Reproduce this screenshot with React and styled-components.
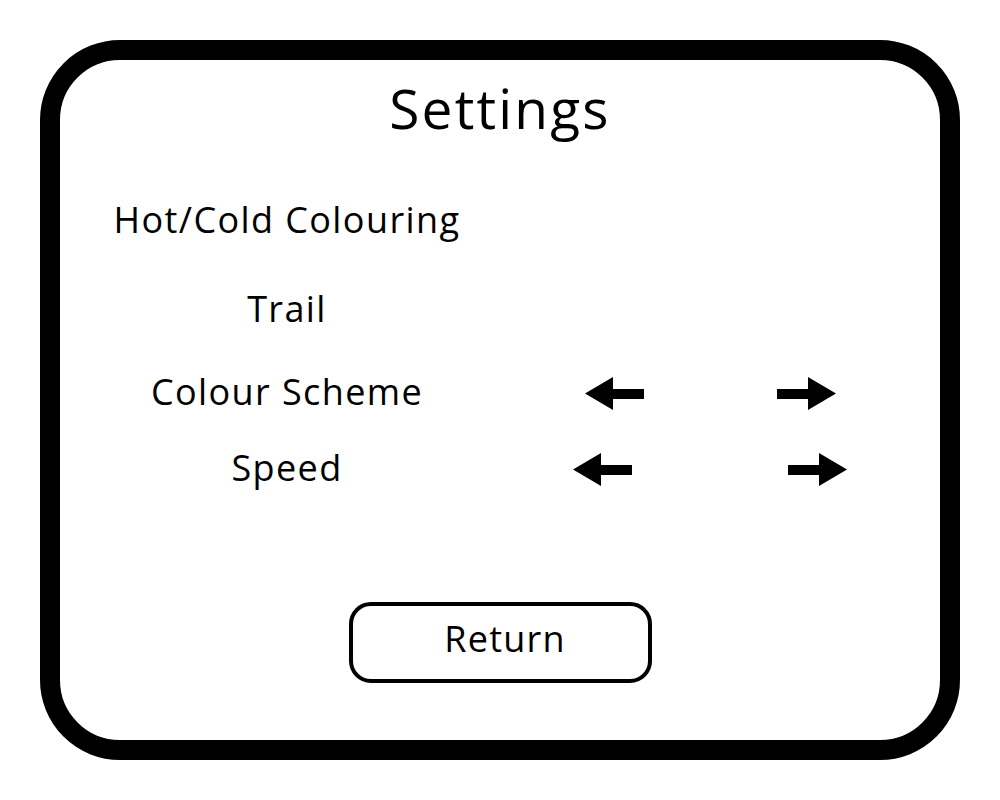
import React from "react";
import styled, { createGlobalStyle } from "styled-components";

// Global reset
const GlobalStyle = createGlobalStyle`
  html, body {
    margin: 0;
    padding: 0;
    background: #ffffff;
  }
  body {
    font-family: "Open Sans", "Noto Sans", sans-serif;
    color: #000000;
  }
`;

// Styled Components
const Page = styled.div`
  width: 1000px;
  height: 800px;
  padding: 40px;
  box-sizing: border-box;
`;

const Frame = styled.div`
  width: 920px;
  height: 720px;
  box-sizing: border-box;
  border: 20px solid #000;
  border-radius: 80px;
  display: flex;
  flex-direction: column;
  align-items: stretch;
`;

const Title = styled.h1`
  margin: 16px 0 0;
  font-size: 55px;
  font-weight: 400;
  line-height: 64px;
  letter-spacing: 2.2px;
  text-align: center;
`;

const Row = styled.div`
  display: grid;
  grid-template-columns: 454px 1fr;
  padding-right: 34px;
  height: 44px;
  align-items: center;
  margin-top: ${(p) => p.$top}px;
`;

const Label = styled.span`
  font-size: 36px;
  line-height: 44px;
  letter-spacing: 1.4px;
  text-align: center;
  white-space: nowrap;
`;

const Controls = styled.div`
  display: flex;
  justify-content: center;
  align-items: center;
  gap: ${(p) => p.$gap}px;
  margin-top: 3px;
`;

const ArrowButton = styled.button`
  border: none;
  background: none;
  padding: 0;
  margin: 0;
  display: flex;
  cursor: pointer;
`;

const ReturnButton = styled.button`
  align-self: center;
  margin-top: 112px;
  width: 303px;
  height: 81px;
  box-sizing: border-box;
  border: 4px solid #000;
  border-radius: 22px;
  background: #fff;
  font-family: "Open Sans", "Noto Sans", sans-serif;
  font-size: 36px;
  letter-spacing: 1.2px;
  color: #000;
  padding: 0 0 8px 10px;
  cursor: pointer;
`;

const Arrow = ({ dir }) => (
  <svg width="59" height="33" viewBox="0 0 59 33">
    <polygon
      points="0,16.5 28,0 28,12 59,12 59,22 28,22 28,33"
      fill="#000"
      transform={dir === "right" ? "translate(59 0) scale(-1 1)" : undefined}
    />
  </svg>
);

const rows = [
  { label: "Hot/Cold Colouring", top: 58 },
  { label: "Trail", top: 45 },
  { label: "Colour Scheme", top: 39, gap: 133 },
  { label: "Speed", top: 32, gap: 156 },
];

const App = () => {
  return (
    <>
      <GlobalStyle />
      <Page>
        <Frame>
          <Title>Settings</Title>
          {rows.map((r) => (
            <Row key={r.label} $top={r.top}>
              <Label>{r.label}</Label>
              {r.gap ? (
                <Controls $gap={r.gap}>
                  <ArrowButton aria-label="previous">
                    <Arrow dir="left" />
                  </ArrowButton>
                  <ArrowButton aria-label="next">
                    <Arrow dir="right" />
                  </ArrowButton>
                </Controls>
              ) : null}
            </Row>
          ))}
          <ReturnButton>Return</ReturnButton>
        </Frame>
      </Page>
    </>
  );
};

export default App;
